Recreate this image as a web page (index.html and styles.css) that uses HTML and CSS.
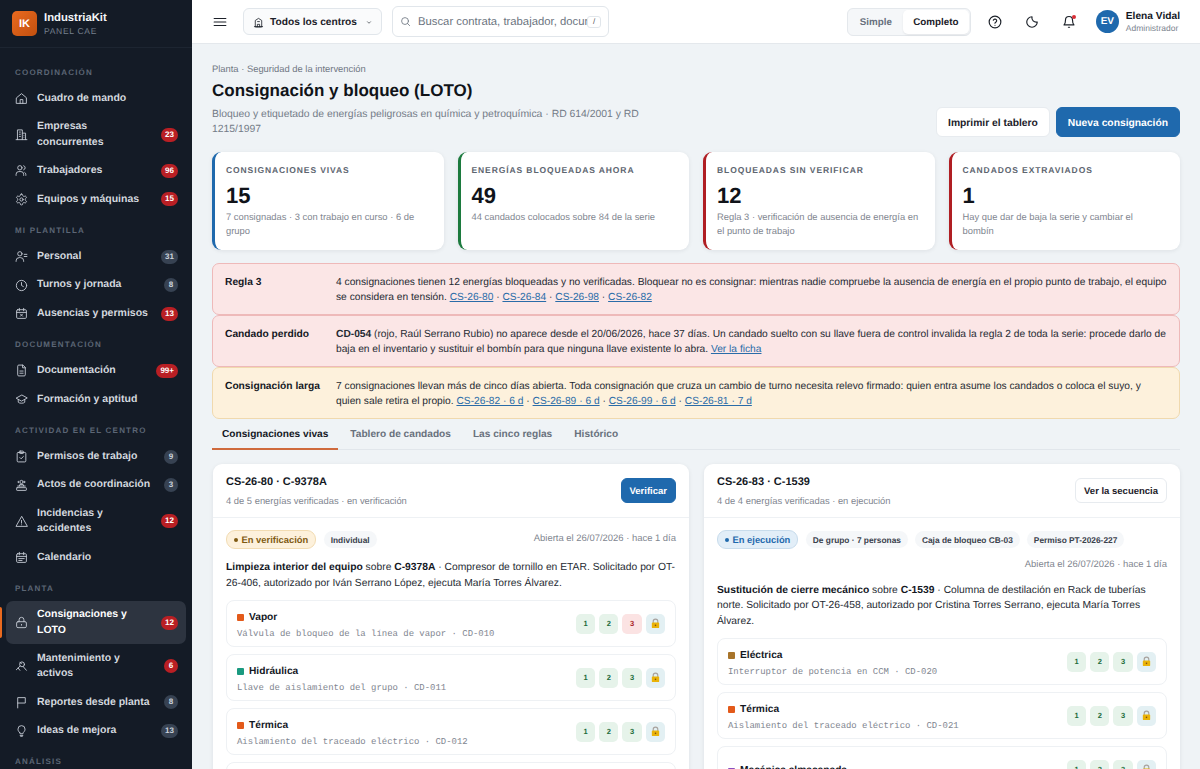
FILE: index.html
```html
<!DOCTYPE html>
<html lang="es">
<head>
    <meta charset="UTF-8">
    <meta name="viewport" content="width=device-width, initial-scale=1.0">
    <title>Consignación y bloqueo (LOTO) - IndustriaKit</title>
    <link rel="stylesheet" href="styles.css">
</head>
<body>
    <svg class="sprite" aria-hidden="true">
        <symbol id="i-home" viewBox="0 0 24 24"><path d="M3 10.5 12 3l9 7.5V21H3z"/><path d="M9.5 21v-7h5v7"/></symbol>
        <symbol id="i-building" viewBox="0 0 24 24"><path d="M2 21.5h20"/><path d="M4.5 21.5V3.5h9v18"/><path d="M13.5 9.5h6v12"/><path d="M8 7.5h2M8 11.5h2M8 15.5h2M16.5 13.5v.01M16.5 17v.01"/></symbol>
        <symbol id="i-users" viewBox="0 0 24 24"><circle cx="9" cy="7" r="4"/><path d="M2 21v-2a5 5 0 0 1 5-5h4a5 5 0 0 1 5 5v2"/><path d="M16 3.2a4 4 0 0 1 0 7.6"/><path d="M20 21v-2a4 4 0 0 0-2-3.4"/></symbol>
        <symbol id="i-gear" viewBox="0 0 24 24"><path d="M12.22 2h-.44a2 2 0 0 0-2 2v.18a2 2 0 0 1-1 1.73l-.43.25a2 2 0 0 1-2 0l-.15-.08a2 2 0 0 0-2.73.73l-.22.38a2 2 0 0 0 .73 2.73l.15.1a2 2 0 0 1 1 1.72v.51a2 2 0 0 1-1 1.74l-.15.09a2 2 0 0 0-.73 2.73l.22.38a2 2 0 0 0 2.73.73l.15-.08a2 2 0 0 1 2 0l.43.25a2 2 0 0 1 1 1.73V20a2 2 0 0 0 2 2h.44a2 2 0 0 0 2-2v-.18a2 2 0 0 1 1-1.73l.43-.25a2 2 0 0 1 2 0l.15.08a2 2 0 0 0 2.73-.73l.22-.39a2 2 0 0 0-.73-2.73l-.15-.08a2 2 0 0 1-1-1.74v-.5a2 2 0 0 1 1-1.74l.15-.09a2 2 0 0 0 .73-2.73l-.22-.38a2 2 0 0 0-2.73-.73l-.15.08a2 2 0 0 1-2 0l-.43-.25a2 2 0 0 1-1-1.73V4a2 2 0 0 0-2-2z"/><circle cx="12" cy="12" r="3"/></symbol>
        <symbol id="i-person" viewBox="0 0 24 24"><circle cx="9" cy="7" r="4"/><path d="M2 21v-1a6 6 0 0 1 6-6h2a6 6 0 0 1 6 6v1"/><path d="M17 8h5M17 12h5"/></symbol>
        <symbol id="i-clock" viewBox="0 0 24 24"><circle cx="12" cy="12" r="9.5"/><path d="M12 6.5V12l3.5 2"/></symbol>
        <symbol id="i-cal-x" viewBox="0 0 24 24"><rect x="3" y="5" width="18" height="16" rx="2"/><path d="M3 10h18M8 2.5V7M16 2.5V7M10 13l4 4M14 13l-4 4"/></symbol>
        <symbol id="i-file" viewBox="0 0 24 24"><path d="M14 2H7a2 2 0 0 0-2 2v16a2 2 0 0 0 2 2h10a2 2 0 0 0 2-2V7z"/><path d="M14 2v5h5M9 13h6M9 17h6"/></symbol>
        <symbol id="i-cap" viewBox="0 0 24 24"><path d="M12 4 2 9.5 12 15l10-5.5z"/><path d="M6 12v5c2 2.5 10 2.5 12 0v-5"/></symbol>
        <symbol id="i-clip" viewBox="0 0 24 24"><rect x="4" y="4.5" width="16" height="17.5" rx="2"/><rect x="8.5" y="2" width="7" height="4.5" rx="1"/><path d="m9 14 2.2 2.2L15.5 12"/></symbol>
        <symbol id="i-meeting" viewBox="0 0 24 24"><circle cx="12" cy="5.5" r="3"/><path d="M7 4 5 5.5 7 7M17 4l2 1.5L17 7"/><path d="M5 13h14M8 13l1-3h6l1 3"/><rect x="3" y="16" width="18" height="5" rx="1"/></symbol>
        <symbol id="i-alert" viewBox="0 0 24 24"><path d="M12 3 1.8 21h20.4z"/><path d="M12 10v5M12 18h.01"/></symbol>
        <symbol id="i-cal" viewBox="0 0 24 24"><rect x="3" y="5" width="18" height="16" rx="2"/><path d="M3 10h18M8 2.5V7M16 2.5V7M7 14h10M7 17.5h6"/></symbol>
        <symbol id="i-lock" viewBox="0 0 24 24"><rect x="3" y="10.5" width="18" height="11" rx="2.5"/><path d="M7.5 10.5V7a4.5 4.5 0 0 1 9 0v3.5"/><path d="M12 15.5v1.5"/></symbol>
        <symbol id="i-tool" viewBox="0 0 24 24"><circle cx="13" cy="8" r="4.5"/><path d="m9.5 11-7 7M15 12l6 7M6 15l3 4M9 4l3 3"/></symbol>
        <symbol id="i-flag" viewBox="0 0 24 24"><path d="M5 22V3h14v10H5"/></symbol>
        <symbol id="i-bulb" viewBox="0 0 24 24"><path d="M8.5 15.5C7 14 5.5 12.5 5.5 9.5a6.5 6.5 0 0 1 13 0c0 3-1.5 4.5-3 6-.6.7-.8 1.5-.8 2.5H9.3c0-1-.2-1.8-.8-2.5z"/><path d="M9.5 21h5M10.5 23.5h3"/></symbol>
        <symbol id="i-menu" viewBox="0 0 24 24"><path d="M2 6h20M2 12h20M2 18h20"/></symbol>
        <symbol id="i-site" viewBox="0 0 24 24"><path d="M5 21V7.5L12 3l7 4.5V21z"/><path d="M3 21h18M9.5 21v-5h5v5M10 10h4"/></symbol>
        <symbol id="i-chev" viewBox="0 0 24 24"><path d="m6 9 6 6 6-6"/></symbol>
        <symbol id="i-search" viewBox="0 0 24 24"><circle cx="11" cy="11" r="7.5"/><path d="m21 21-4.5-4.5"/></symbol>
        <symbol id="i-help" viewBox="0 0 24 24"><circle cx="12" cy="12" r="10"/><path d="M9.1 9a3 3 0 0 1 5.8 1c0 2-3 2.5-3 4M12 17.5h.01"/></symbol>
        <symbol id="i-moon" viewBox="0 0 24 24"><path d="M12 3a7.5 7.5 0 0 0 9 9 9 9 0 1 1-9-9z"/></symbol>
        <symbol id="i-bell" viewBox="0 0 24 24"><path d="M6 8.5a6 6 0 0 1 12 0c0 6 2.5 8.5 2.5 8.5h-17S6 14.5 6 8.5z"/><path d="M11 21h2"/></symbol>
        <symbol id="i-padlock" viewBox="0 0 24 24"><path d="M7 11V7.5a5 5 0 0 1 10 0V11" fill="none" stroke="#a8a29e" stroke-width="2.5"/><rect x="4" y="10" width="16" height="12" rx="2" fill="#eab308" stroke="none"/><circle cx="12" cy="16" r="1.8" fill="#854d0e" stroke="none"/></symbol>
    </svg>

    <div class="app">
        <aside class="sidebar">
            <div class="brand">
                <div class="brand-logo">IK</div>
                <div>
                    <div class="brand-name">IndustriaKit</div>
                    <div class="brand-sub">Panel CAE</div>
                </div>
            </div>

            <nav class="nav">
                <div class="nav-label">Coordinación</div>
                <a class="nav-item"><svg class="nav-icon"><use href="#i-home"/></svg><span class="nav-text">Cuadro de mando</span></a>
                <a class="nav-item"><svg class="nav-icon"><use href="#i-building"/></svg><span class="nav-text">Empresas concurrentes</span><span class="badge red">23</span></a>
                <a class="nav-item"><svg class="nav-icon"><use href="#i-users"/></svg><span class="nav-text">Trabajadores</span><span class="badge red">96</span></a>
                <a class="nav-item"><svg class="nav-icon"><use href="#i-gear"/></svg><span class="nav-text">Equipos y máquinas</span><span class="badge red">15</span></a>

                <div class="nav-label">Mi plantilla</div>
                <a class="nav-item"><svg class="nav-icon"><use href="#i-person"/></svg><span class="nav-text">Personal</span><span class="badge">31</span></a>
                <a class="nav-item"><svg class="nav-icon"><use href="#i-clock"/></svg><span class="nav-text">Turnos y jornada</span><span class="badge">8</span></a>
                <a class="nav-item"><svg class="nav-icon"><use href="#i-cal-x"/></svg><span class="nav-text">Ausencias y permisos</span><span class="badge red">13</span></a>

                <div class="nav-label">Documentación</div>
                <a class="nav-item"><svg class="nav-icon"><use href="#i-file"/></svg><span class="nav-text">Documentación</span><span class="badge red">99+</span></a>
                <a class="nav-item"><svg class="nav-icon"><use href="#i-cap"/></svg><span class="nav-text">Formación y aptitud</span></a>

                <div class="nav-label">Actividad en el centro</div>
                <a class="nav-item"><svg class="nav-icon"><use href="#i-clip"/></svg><span class="nav-text">Permisos de trabajo</span><span class="badge">9</span></a>
                <a class="nav-item"><svg class="nav-icon"><use href="#i-meeting"/></svg><span class="nav-text">Actos de coordinación</span><span class="badge">3</span></a>
                <a class="nav-item"><svg class="nav-icon"><use href="#i-alert"/></svg><span class="nav-text">Incidencias y accidentes</span><span class="badge red">12</span></a>
                <a class="nav-item"><svg class="nav-icon"><use href="#i-cal"/></svg><span class="nav-text">Calendario</span></a>

                <div class="nav-label">Planta</div>
                <a class="nav-item active"><svg class="nav-icon"><use href="#i-lock"/></svg><span class="nav-text">Consignaciones y LOTO</span><span class="badge red">12</span></a>
                <a class="nav-item"><svg class="nav-icon"><use href="#i-tool"/></svg><span class="nav-text">Mantenimiento y activos</span><span class="badge red">6</span></a>
                <a class="nav-item"><svg class="nav-icon"><use href="#i-flag"/></svg><span class="nav-text">Reportes desde planta</span><span class="badge">8</span></a>
                <a class="nav-item"><svg class="nav-icon"><use href="#i-bulb"/></svg><span class="nav-text">Ideas de mejora</span><span class="badge">13</span></a>

                <div class="nav-label">Análisis</div>
            </nav>
        </aside>

        <div class="main">
            <header class="topbar">
                <svg class="top-icon menu"><use href="#i-menu"/></svg>
                <button class="center-select">
                    <svg class="small-icon"><use href="#i-site"/></svg>
                    <span>Todos los centros</span>
                    <svg class="chev"><use href="#i-chev"/></svg>
                </button>
                <div class="search">
                    <svg class="small-icon"><use href="#i-search"/></svg>
                    <span class="search-text">Buscar contrata, trabajador, documento…</span>
                    <span class="kbd">/</span>
                </div>
                <div class="segment">
                    <span class="seg">Simple</span>
                    <span class="seg on">Completo</span>
                </div>
                <svg class="top-icon help"><use href="#i-help"/></svg>
                <svg class="top-icon moon"><use href="#i-moon"/></svg>
                <div class="bell"><svg class="top-icon"><use href="#i-bell"/></svg><span class="bell-dot"></span></div>
                <div class="avatar">EV</div>
                <div class="user">
                    <div class="user-name">Elena Vidal</div>
                    <div class="user-role">Administrador</div>
                </div>
            </header>

            <main class="content">
                <div class="page-head">
                    <div class="page-title">
                        <div class="crumbs">Planta · Seguridad de la intervención</div>
                        <h1>Consignación y bloqueo (LOTO)</h1>
                        <p class="lead">Bloqueo y etiquetado de energías peligrosas en química y petroquímica · RD 614/2001 y RD 1215/1997</p>
                    </div>
                    <div class="page-actions">
                        <button class="btn">Imprimir el tablero</button>
                        <button class="btn primary">Nueva consignación</button>
                    </div>
                </div>

                <section class="kpis">
                    <div class="kpi blue">
                        <div class="kpi-label">Consignaciones vivas</div>
                        <div class="kpi-value">15</div>
                        <div class="kpi-note">7 consignadas · 3 con trabajo en curso · 6 de grupo</div>
                    </div>
                    <div class="kpi green">
                        <div class="kpi-label">Energías bloqueadas ahora</div>
                        <div class="kpi-value">49</div>
                        <div class="kpi-note">44 candados colocados sobre 84 de la serie</div>
                    </div>
                    <div class="kpi red">
                        <div class="kpi-label">Bloqueadas sin verificar</div>
                        <div class="kpi-value">12</div>
                        <div class="kpi-note">Regla 3 · verificación de ausencia de energía en el punto de trabajo</div>
                    </div>
                    <div class="kpi red">
                        <div class="kpi-label">Candados extraviados</div>
                        <div class="kpi-value">1</div>
                        <div class="kpi-note">Hay que dar de baja la serie y cambiar el bombín</div>
                    </div>
                </section>

                <section class="alerts">
                    <div class="alert danger">
                        <strong>Regla 3</strong>
                        <p>4 consignaciones tienen 12 energías bloqueadas y no verificadas. Bloquear no es consignar: mientras nadie compruebe la ausencia de energía en el propio punto de trabajo, el equipo se considera en tensión. <a>CS-26-80</a> · <a>CS-26-84</a> · <a>CS-26-98</a> · <a>CS-26-82</a></p>
                    </div>
                    <div class="alert danger">
                        <strong>Candado perdido</strong>
                        <p><b>CD-054</b> (rojo, Raúl Serrano Rubio) no aparece desde el 20/06/2026, hace 37 días. Un candado suelto con su llave fuera de control invalida la regla 2 de toda la serie: procede darlo de baja en el inventario y sustituir el bombín para que ninguna llave existente lo abra. <a>Ver la ficha</a></p>
                    </div>
                    <div class="alert warn">
                        <strong>Consignación larga</strong>
                        <p>7 consignaciones llevan más de cinco días abierta. Toda consignación que cruza un cambio de turno necesita relevo firmado: quien entra asume los candados o coloca el suyo, y quien sale retira el propio. <a>CS-26-82 · 6 d</a> · <a>CS-26-89 · 6 d</a> · <a>CS-26-99 · 6 d</a> · <a>CS-26-81 · 7 d</a></p>
                    </div>
                </section>

                <div class="tabs">
                    <span class="tab on">Consignaciones vivas</span>
                    <span class="tab">Tablero de candados</span>
                    <span class="tab">Las cinco reglas</span>
                    <span class="tab">Histórico</span>
                </div>

                <section class="cards">
                    <article class="card">
                        <div class="card-head">
                            <div>
                                <h3>CS-26-80 · C-9378A</h3>
                                <div class="card-sub">4 de 5 energías verificadas · en verificación</div>
                            </div>
                            <button class="btn small primary">Verificar</button>
                        </div>
                        <div class="card-body">
                            <div class="meta">
                                <span class="pill state amber"><i></i>En verificación</span>
                                <span class="pill">Individual</span>
                                <span class="opened">Abierta el 26/07/2026 · hace 1 día</span>
                            </div>
                            <p class="desc"><b>Limpieza interior del equipo</b> sobre <b>C-9378A</b> · Compresor de tornillo en ETAR. Solicitado por OT-26-406, autorizado por Iván Serrano López, ejecuta María Torres Álvarez.</p>
                            <div class="energy">
                                <div class="energy-info">
                                    <div class="energy-name"><i class="sq orange"></i>Vapor</div>
                                    <div class="energy-point">Válvula de bloqueo de la línea de vapor · CD-010</div>
                                </div>
                                <div class="steps"><span class="step">1</span><span class="step">2</span><span class="step bad">3</span><span class="step lock"><svg><use href="#i-padlock"/></svg></span></div>
                            </div>
                            <div class="energy">
                                <div class="energy-info">
                                    <div class="energy-name"><i class="sq teal"></i>Hidráulica</div>
                                    <div class="energy-point">Llave de aislamiento del grupo · CD-011</div>
                                </div>
                                <div class="steps"><span class="step">1</span><span class="step">2</span><span class="step">3</span><span class="step lock"><svg><use href="#i-padlock"/></svg></span></div>
                            </div>
                            <div class="energy">
                                <div class="energy-info">
                                    <div class="energy-name"><i class="sq orange"></i>Térmica</div>
                                    <div class="energy-point">Aislamiento del traceado eléctrico · CD-012</div>
                                </div>
                                <div class="steps"><span class="step">1</span><span class="step">2</span><span class="step">3</span><span class="step lock"><svg><use href="#i-padlock"/></svg></span></div>
                            </div>
                            <div class="energy"></div>
                        </div>
                    </article>

                    <article class="card">
                        <div class="card-head">
                            <div>
                                <h3>CS-26-83 · C-1539</h3>
                                <div class="card-sub">4 de 4 energías verificadas · en ejecución</div>
                            </div>
                            <button class="btn small">Ver la secuencia</button>
                        </div>
                        <div class="card-body">
                            <div class="meta">
                                <span class="pill state blue"><i></i>En ejecución</span>
                                <span class="pill">De grupo · 7 personas</span>
                                <span class="pill">Caja de bloqueo CB-03</span>
                                <span class="pill">Permiso PT-2026-227</span>
                                <span class="opened">Abierta el 26/07/2026 · hace 1 día</span>
                            </div>
                            <p class="desc"><b>Sustitución de cierre mecánico</b> sobre <b>C-1539</b> · Columna de destilación en Rack de tuberías norte. Solicitado por OT-26-458, autorizado por Cristina Torres Serrano, ejecuta María Torres Álvarez.</p>
                            <div class="energy">
                                <div class="energy-info">
                                    <div class="energy-name"><i class="sq brown"></i>Eléctrica</div>
                                    <div class="energy-point">Interruptor de potencia en CCM · CD-020</div>
                                </div>
                                <div class="steps"><span class="step">1</span><span class="step">2</span><span class="step">3</span><span class="step lock"><svg><use href="#i-padlock"/></svg></span></div>
                            </div>
                            <div class="energy">
                                <div class="energy-info">
                                    <div class="energy-name"><i class="sq orange"></i>Térmica</div>
                                    <div class="energy-point">Aislamiento del traceado eléctrico · CD-021</div>
                                </div>
                                <div class="steps"><span class="step">1</span><span class="step">2</span><span class="step">3</span><span class="step lock"><svg><use href="#i-padlock"/></svg></span></div>
                            </div>
                            <div class="energy">
                                <div class="energy-info">
                                    <div class="energy-name"><i class="sq purple"></i>Mecánica almacenada</div>
                                </div>
                                <div class="steps"><span class="step">1</span><span class="step">2</span><span class="step">3</span><span class="step lock"><svg><use href="#i-padlock"/></svg></span></div>
                            </div>
                        </div>
                    </article>
                </section>
            </main>
        </div>
    </div>
</body>
</html>
```

FILE: styles.css
```css
* {
    box-sizing: border-box;
}
html, body {
    height: 100%;
}
body {
    margin: 0;
    font-family: 'Liberation Sans', Arial, sans-serif;
    font-size: 11px;
    color: #14181f;
    background: #eff3f6;
    overflow: hidden;
    text-rendering: geometricPrecision;
}
button {
    font-family: inherit;
    text-rendering: inherit;
}
.sprite {
    display: none;
}
svg {
    fill: none;
    stroke: currentColor;
    stroke-width: 1.8;
    stroke-linecap: round;
    stroke-linejoin: round;
}
.app {
    display: flex;
    height: 769px;
    overflow: hidden;
}

/* sidebar */
.sidebar {
    width: 192px;
    flex: none;
    background: #141b26;
    color: #d3d8df;
    overflow: hidden;
}
.brand {
    display: flex;
    align-items: center;
    gap: 7px;
    height: 48px;
    padding: 0 12px;
    border-bottom: 1px solid #1d2531;
}
.brand-logo {
    width: 25px;
    height: 25px;
    border-radius: 5px;
    background: linear-gradient(135deg, #ea6a1f, #c2500f);
    color: #fff;
    font-size: 11px;
    font-weight: 700;
    display: flex;
    align-items: center;
    justify-content: center;
}
.brand-name {
    color: #f3f5f7;
    font-size: 11.3px;
    font-weight: 700;
    line-height: 14px;
}
.brand-sub {
    color: #76808e;
    font-size: 8.5px;
    line-height: 12px;
    letter-spacing: 0.7px;
    text-transform: uppercase;
}
.nav {
    padding: 7.5px 6px 0;
}
.nav-label {
    padding: 12px 9px 7px;
    color: #5c6675;
    font-size: 8px;
    font-weight: 700;
    line-height: 10px;
    letter-spacing: 1.2px;
    text-transform: uppercase;
}
.nav-item {
    position: relative;
    display: flex;
    align-items: center;
    gap: 9px;
    padding: 6.5px 8px 6.5px 9px;
    border-radius: 7px;
    font-size: 10.5px;
    font-weight: 700;
    line-height: 15.4px;
}
.nav-icon {
    width: 13px;
    height: 13px;
    flex: none;
    color: #c3c9d2;
    stroke-width: 1.7;
}
.nav-text {
    flex: 1;
}
.nav-item.active {
    background: #2d3440;
    color: #fff;
}
.nav-item.active::before {
    content: "";
    position: absolute;
    left: -6px;
    top: 6px;
    bottom: 6px;
    width: 2px;
    border-radius: 0 2px 2px 0;
    background: #ea6a1f;
}
.badge {
    flex: none;
    min-width: 14px;
    height: 14px;
    padding: 0 4px;
    border-radius: 7px;
    background: #374252;
    color: #ccd3dc;
    font-size: 8px;
    font-weight: 700;
    line-height: 14px;
    text-align: center;
}
.badge.red {
    background: #b91f24;
    color: #fff;
}

/* topbar */
.main {
    flex: 1;
    min-width: 0;
    display: flex;
    flex-direction: column;
}
.topbar {
    flex: none;
    display: flex;
    align-items: center;
    height: 44px;
    padding: 0 20px;
    background: #fff;
    border-bottom: 1px solid #e4e8ec;
}
.top-icon {
    width: 14px;
    height: 14px;
    color: #1c2129;
    display: block;
    stroke-width: 2;
}
.menu {
    margin: 0 16px 0 1px;
}
.center-select {
    display: flex;
    align-items: center;
    gap: 6px;
    width: 139px;
    height: 27px;
    padding: 1px 9px 0;
    background: #fafbfc;
    border: 1px solid #e1e6eb;
    border-radius: 6px;
    color: #1c2129;
    font-size: 10.2px;
    font-weight: 700;
    white-space: nowrap;
}
.small-icon {
    width: 11px;
    height: 11px;
    flex: none;
}
.chev {
    width: 9px;
    height: 9px;
    margin-left: 3px;
    stroke-width: 2.5;
}
.search {
    display: flex;
    align-items: center;
    gap: 7px;
    width: 217px;
    height: 31px;
    margin-left: 10px;
    padding: 0 7px;
    background: #fff;
    border: 1px solid #e1e6eb;
    border-radius: 6px;
    color: #6c7480;
    font-size: 11.3px;
}
.search-text {
    flex: 1;
    min-width: 0;
    white-space: nowrap;
    overflow: hidden;
}
.kbd {
    flex: none;
    width: 14px;
    height: 12px;
    margin-left: -7px;
    border: 1px solid #e1e6eb;
    border-radius: 3px;
    background: #fff;
    color: #555;
    font-size: 8px;
    line-height: 10px;
    text-align: center;
}
.segment {
    display: flex;
    margin-left: auto;
    padding: 1px;
    height: 28px;
    background: #f5f7f9;
    border: 1px solid #e4e8ec;
    border-radius: 6px;
    font-size: 9.8px;
    font-weight: 700;
}
.seg {
    width: 54px;
    line-height: 26px;
    text-align: center;
    color: #69717d;
}
.seg.on {
    width: 66px;
    background: #fff;
    color: #1c2129;
    border-radius: 5px;
    box-shadow: 0 1px 2px rgba(20, 30, 40, 0.08);
}
.help {
    margin-left: 17px;
}
.moon {
    margin-left: 23px;
}
.bell {
    position: relative;
    margin-left: 23px;
}
.bell-dot {
    position: absolute;
    top: 0;
    right: 0;
    width: 4px;
    height: 4px;
    border-radius: 50%;
    background: #d92d35;
}
.avatar {
    width: 23px;
    height: 23px;
    margin-left: 20px;
    border-radius: 50%;
    background: #1f69ad;
    color: #fff;
    font-size: 10px;
    font-weight: 700;
    line-height: 23px;
    text-align: center;
}
.user {
    margin-left: 7px;
}
.user-name {
    padding-top: 1px;
    font-size: 10.2px;
    font-weight: 700;
    line-height: 13px;
}
.user-role {
    color: #7c8490;
    font-size: 8.5px;
    line-height: 11px;
}

/* page */
.content {
    flex: 1;
    min-height: 0;
    overflow: hidden;
    padding: 18px 20px 0;
}
.page-head {
    display: flex;
    align-items: flex-end;
    justify-content: space-between;
    margin-bottom: 15px;
}
.page-title {
    width: 430px;
}
.crumbs {
    color: #6f7783;
    font-size: 9.4px;
    line-height: 13px;
}
h1 {
    margin: 5px 0 5px;
    font-size: 17px;
    line-height: 22px;
    color: #101319;
}
.lead {
    margin: 0;
    color: #737b87;
    font-size: 10.4px;
    line-height: 15px;
}
.page-actions {
    display: flex;
    gap: 6px;
}
.btn {
    height: 30px;
    padding: 2px 11px 0;
    background: #fff;
    border: 1px solid #e7ebef;
    border-radius: 6px;
    color: #1c2129;
    font-size: 10.3px;
    font-weight: 700;
}
.btn.primary {
    background: #1f69ad;
    border-color: #1f69ad;
    color: #fff;
}
.kpis {
    display: grid;
    grid-template-columns: repeat(4, 1fr);
    gap: 14px;
    margin-bottom: 13px;
}
.kpi {
    height: 98px;
    padding: 12px 15.5px 0 11px;
    background: #fff;
    border-left: 3px solid #1f69ad;
    border-radius: 9px;
    box-shadow: 0 1px 4px rgba(20, 30, 40, 0.08);
}
.kpi.green {
    border-left-color: #1c7a3e;
}
.kpi.red {
    border-left-color: #b01e23;
}
.kpi-label {
    color: #5d6570;
    font-size: 8.5px;
    font-weight: 700;
    line-height: 12px;
    letter-spacing: 0.9px;
    text-transform: uppercase;
}
.kpi-value {
    margin-top: 5px;
    font-size: 22px;
    font-weight: 700;
    line-height: 29px;
    color: #101319;
}
.kpi-note {
    color: #7f8690;
    font-size: 9.4px;
    line-height: 14px;
}
.alert {
    display: grid;
    grid-template-columns: 111px 1fr;
    height: 52px;
    padding: 11px 11px 0 12px;
    background: #fbe6e6;
    border: 1px solid #eeb9b9;
    border-radius: 7px;
    font-size: 10.22px;
    line-height: 15px;
}
.alert.warn {
    background: #fdf1dc;
    border-color: #f0d9ae;
}
.alert strong {
    color: #14181f;
}
.alert p {
    margin: 0;
    color: #262b33;
}
.alert a {
    color: #2a6ca8;
    text-decoration: underline;
}
.tabs {
    display: flex;
    gap: 2px;
    margin-bottom: 14px;
    border-bottom: 1px solid #e1e6eb;
}
.tab {
    padding: 8px 10px 6px;
    color: #69717d;
    font-size: 10.15px;
    font-weight: 700;
    line-height: 15px;
    border-bottom: 2px solid transparent;
    margin-bottom: -1px;
}
.tab.on {
    color: #14181f;
    border-bottom-color: #cf6a3d;
}
.cards {
    display: grid;
    grid-template-columns: 1fr 1fr;
    gap: 14px;
}
.card {
    background: #fff;
    border-radius: 9px;
    box-shadow: 0 1px 4px rgba(20, 30, 40, 0.08);
    margin-left: 1px;
}
.card-head {
    display: flex;
    align-items: center;
    justify-content: space-between;
    height: 54px;
    padding: 0 13px;
    border-bottom: 1px solid #eef1f4;
}
h3 {
    margin: 1px 0 4px;
    font-size: 11px;
    line-height: 15px;
}
.card-sub {
    color: #7f8690;
    font-size: 9.4px;
    line-height: 13px;
}
.btn.small {
    height: 25px;
    padding: 1px 8px 0;
    font-size: 9.5px;
}
.card-body {
    padding: 12px 13px;
}
.meta {
    display: flex;
    flex-wrap: wrap;
    align-items: center;
    gap: 10px 7px;
    margin-bottom: 11px;
}
.pill {
    height: 17px;
    padding: 0 7px;
    background: #f5f7f9;
    border-radius: 9px;
    color: #3b424d;
    font-size: 8.35px;
    font-weight: 700;
    line-height: 18px;
}
.pill.state {
    display: flex;
    align-items: center;
    gap: 4px;
    height: 19px;
    padding: 1px 6.5px 0;
    border: 1px solid;
    font-size: 9.4px;
    margin-right: 1px;
}
.pill.state i {
    width: 4px;
    height: 4px;
    border-radius: 50%;
    background: currentColor;
}
.pill.amber {
    background: #fdf1dc;
    border-color: #f2dcb3;
    color: #7f5a12;
}
.pill.blue {
    background: #e2eef8;
    border-color: #c8dcec;
    color: #1f69ad;
}
.opened {
    margin-left: auto;
    color: #7f8690;
    font-size: 9.45px;
    line-height: 12.5px;
}
.desc {
    margin: 0 0 9px;
    font-size: 10.3px;
    line-height: 15.6px;
    color: #262b33;
}
.desc b {
    color: #14181f;
}
.energy {
    display: flex;
    align-items: center;
    justify-content: space-between;
    height: 47px;
    margin-bottom: 7px;
    padding: 0 10px;
    background: #fff;
    border: 1px solid #eef1f4;
    border-radius: 8px;
}
.energy-info {
    padding-top: 3px;
}
.energy-name {
    display: flex;
    align-items: center;
    gap: 5px;
    font-size: 10.2px;
    font-weight: 700;
    line-height: 14px;
}
.sq {
    width: 7px;
    height: 7px;
    border-radius: 1px;
}
.sq.orange { background: #e35a1a; }
.sq.teal { background: #1a9a80; }
.sq.brown { background: #a8742a; }
.sq.purple { background: #8a4fbf; }
.energy-point {
    margin-top: 3px;
    color: #7f8690;
    font-family: 'Liberation Mono', monospace;
    font-size: 8.95px;
    line-height: 12px;
}
.steps {
    display: flex;
    gap: 4px;
}
.step {
    width: 19.3px;
    height: 20px;
    background: #e6f3ea;
    border-radius: 5px;
    color: #1c6b3b;
    font-size: 7.5px;
    font-weight: 700;
    line-height: 19px;
    text-align: center;
}
.step.bad {
    background: #fbe3e3;
    color: #a8242a;
}
.step.lock {
    background: #e3f0f3;
    display: flex;
    align-items: center;
    justify-content: center;
}
.step.lock svg {
    width: 11px;
    height: 11px;
}
```
